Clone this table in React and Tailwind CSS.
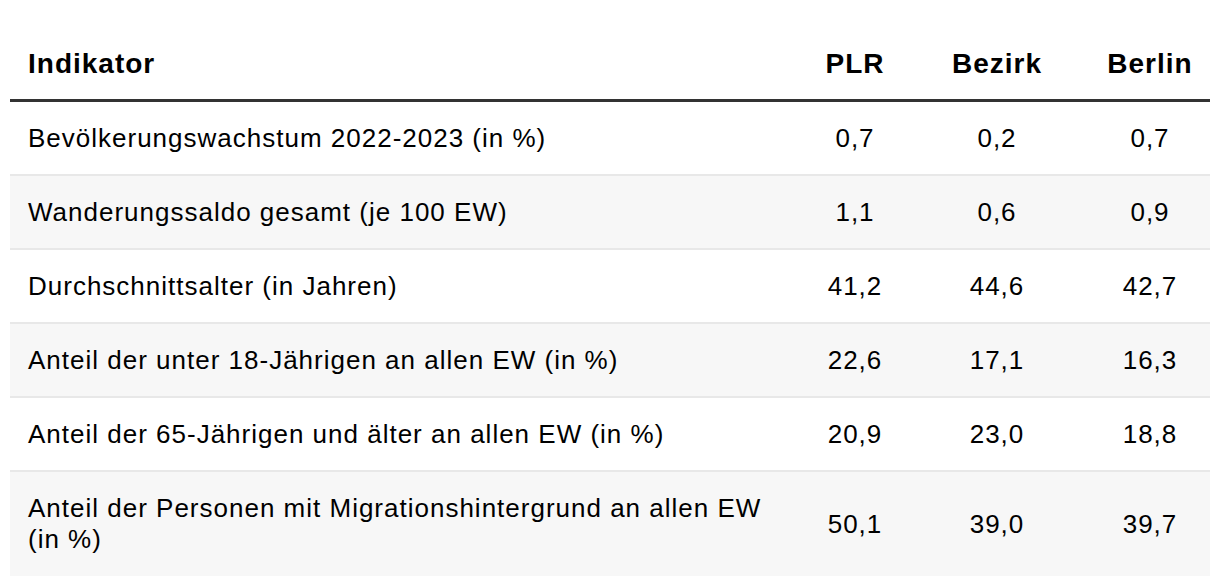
import React from "react";

const rows = [
  { label: "Bevölkerungswachstum 2022-2023 (in %)", plr: "0,7", bezirk: "0,2", berlin: "0,7" },
  { label: "Wanderungssaldo gesamt (je 100 EW)", plr: "1,1", bezirk: "0,6", berlin: "0,9" },
  { label: "Durchschnittsalter (in Jahren)", plr: "41,2", bezirk: "44,6", berlin: "42,7" },
  { label: "Anteil der unter 18-Jährigen an allen EW (in %)", plr: "22,6", bezirk: "17,1", berlin: "16,3" },
  { label: "Anteil der 65-Jährigen und älter an allen EW (in %)", plr: "20,9", bezirk: "23,0", berlin: "18,8" },
  {
    label: "Anteil der Personen mit Migrationshintergrund an allen EW (in %)",
    plr: "50,1",
    bezirk: "39,0",
    berlin: "39,7",
  },
];

const cols = "grid grid-cols-[796px_98px_186px_120px]";

function App() {
  return (
    <div className="bg-white w-[1220px] h-[586px] px-[10px] font-['Liberation_Sans',Arial,sans-serif] text-black">
      {/* header */}
      <div
        className={`${cols} h-[102px] items-end pb-[21px] border-b-[3px] border-[#333333] text-[28px] font-bold leading-none tracking-[1px]`}
      >
        <div className="pl-[18px]">Indikator</div>
        <div className="text-center">PLR</div>
        <div className="text-center">Bezirk</div>
        <div className="text-center">Berlin</div>
      </div>
      {rows.map((row, i) => (
        <div
          key={i}
          className={`${cols} items-center text-[26px] leading-[31px] tracking-[1px] ${
            i % 2 === 1 ? "bg-[#f7f7f7]" : "bg-white"
          } ${i === rows.length - 1 ? "h-[104px]" : "h-[74px] border-b-2 border-[#e8e8e8]"}`}
        >
          <div className="pl-[18px] pr-[40px]">{row.label}</div>
          <div className="text-center">{row.plr}</div>
          <div className="text-center">{row.bezirk}</div>
          <div className="text-center">{row.berlin}</div>
        </div>
      ))}
    </div>
  );
}

export default App;
